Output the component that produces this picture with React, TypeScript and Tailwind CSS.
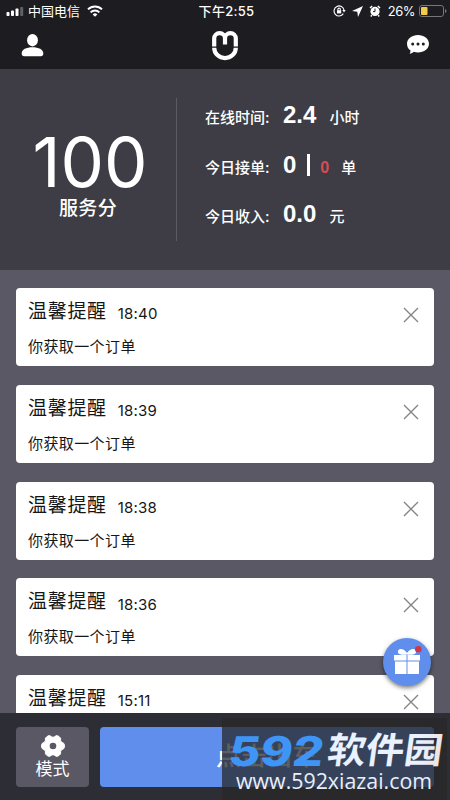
type Notice = { id: number; time: string };

const notices: Notice[] = [
  { id: 1, time: '18:40' },
  { id: 2, time: '18:39' },
  { id: 3, time: '18:38' },
  { id: 4, time: '18:36' },
  { id: 5, time: '15:11' },
];

function StatusBar() {
  return (
    <div className="grid h-[22px] grid-cols-[1fr_auto_1fr] items-center pl-[6px] pr-[3px] leading-none">
      <div className="flex items-center">
        <svg width="18" height="9" viewBox="0 0 18 9" fill="#fff">
          <rect x="0.5" y="5" width="3" height="4" rx="0.8" />
          <rect x="5" y="3.5" width="3" height="5.5" rx="0.8" />
          <rect x="9.5" y="1.5" width="3" height="7.5" rx="0.8" />
          <rect x="14.2" y="0" width="3" height="9" rx="0.8" opacity="0.3" />
        </svg>
        <span className="ml-[4px] text-[13px]">中国电信</span>
        <svg className="ml-[7px]" width="16" height="12" viewBox="0 0 16 12" fill="none" stroke="#fff" strokeWidth="2">
          <path d="M1 4.4a10 10 0 0 1 14 0" />
          <path d="M3.6 7.4a6.3 6.3 0 0 1 8.8 0" />
          <path d="M8 11.8 5.7 9.4a3.3 3.3 0 0 1 4.6 0z" fill="#fff" stroke="none" />
        </svg>
      </div>
      <span className="text-[13px] font-medium tracking-[0.3px]">下午2:55</span>
      <div className="flex items-center justify-end">
        <svg width="13" height="12" viewBox="0 0 13 12" fill="none" stroke="#fff" strokeWidth="1.1">
          <path d="M10.3 8.6A5 5 0 1 1 11 5.2" />
          <path d="M9.3 5h3.4L11 7.4z" fill="#fff" stroke="none" />
          <rect x="4" y="5.2" width="4.2" height="3.2" fill="#fff" stroke="none" />
          <path d="M4.9 5.4V4.3a1.2 1.2 0 0 1 2.4 0v1.1" />
        </svg>
        <svg className="ml-[6px]" width="11" height="11" viewBox="0 0 11 11" fill="#fff">
          <path d="M11 0 6 11 5.3 5.7 0 5z" />
        </svg>
        <svg className="ml-[6px]" width="12" height="12" viewBox="0 0 12 12">
          <circle cx="6" cy="6.4" r="4.6" fill="#fff" />
          <path d="M1 3 3.2 1M11 3 8.8 1M2.8 10.2l-1 1.2M9.2 10.2l1 1.2" stroke="#fff" strokeWidth="1.5" />
          <path d="M6 3.6v3H4" fill="none" stroke="#1d1c21" />
        </svg>
        <span className="ml-[7px] text-[13px] tracking-[-0.5px]">26%</span>
        <svg className="ml-[4px]" width="28" height="12" viewBox="0 0 28 12">
          <rect x="0.5" y="0.5" width="24" height="11" rx="2.4" fill="none" stroke="#77767a" />
          <rect x="2" y="2" width="6.5" height="8" rx="1" fill="#f4cb47" />
          <path d="M26 4v4q1.5-.7 1.5-2T26 4" fill="#77767a" />
        </svg>
      </div>
    </div>
  );
}

function TitleBar() {
  return (
    <div className="flex h-[47px] items-start justify-between px-[21px]">
      <svg className="mt-[12px]" width="23" height="23" viewBox="0 0 23 23" fill="#fff">
        <ellipse cx="11.5" cy="6.2" rx="5.4" ry="6.2" />
        <path d="M.7 19.3c0-3.8 4.6-6 10.8-6s10.8 2.2 10.8 6c0 2.2-.8 3-2.5 3H3.2c-1.7 0-2.5-.8-2.5-3z" />
      </svg>
      <svg className="-ml-[2px] mt-[9px]" width="26" height="30" viewBox="0 0 26 30" fill="none" stroke="#fff" strokeWidth="4.2">
        <path d="M2.2 15.6V7.600a5.400 5.400 0 0 1 10.800 0V13.500M13 13.500V7.600a5.400 5.400 0 0 1 10.800 0V15.600" />
        <path d="M2.200 16.800a10.800 10.300 0 0 0 21.600 0" />
      </svg>
      <svg className="mt-[13px]" width="22" height="20" viewBox="0 0 22 20">
        <path d="M11 0c6 0 11 3.7 11 8.7s-5 8.7-11 8.7c-1.5 0-3-.2-4.2-.6-1 .9-2.4 1.7-4.2 1.9.7-.9 1-2 .9-3.1C1.3 14 0 11.5 0 8.7 0 3.7 5 0 11 0" fill="#fff" />
        <g fill="#1d1c21">
          <circle cx="5.7" cy="9" r="1.5" />
          <circle cx="11" cy="9" r="1.5" />
          <circle cx="16.3" cy="9" r="1.5" />
        </g>
      </svg>
    </div>
  );
}

function Stats() {
  return (
    <section className="flex h-[201px] shrink-0 items-start bg-[#3e3d46] pt-[29px]">
      <div className="flex w-[176px] flex-col items-center">
        <div className="mt-[32px] h-[65px] pl-[4px] text-[69px] leading-[65px]">100</div>
        <div className="mt-[1px] text-[19px] font-medium leading-[26px] tracking-[0.4px]">服务分</div>
      </div>
      <div className="h-[143px] w-px bg-[#5b5a64]" />
      <div className="-mt-px ml-[28px] text-[15px] font-medium">
        <div className="flex h-[36px] items-center">
          <span className="mt-[6px] w-[78px]">在线时间:</span>
          <b className="font-['Liberation_Sans',sans-serif] text-[24px]">2.4</b>
          <span className="ml-[13px] mt-[6px]">小时</span>
        </div>
        <div className="mt-[14px] flex h-[36px] items-center">
          <span className="mt-[6px] w-[78px]">今日接单:</span>
          <b className="font-['Liberation_Sans',sans-serif] text-[24px]">0</b>
          <span className="ml-[11px] h-[22px] w-[3px] bg-white" />
          <b className="ml-[10px] mt-[6px] font-['Liberation_Sans',sans-serif] text-[16px] text-[#d84c55]">0</b>
          <span className="ml-[12px] mt-[6px]">单</span>
        </div>
        <div className="mt-[13px] flex h-[36px] items-center">
          <span className="mt-[6px] w-[78px]">今日收入:</span>
          <b className="font-['Liberation_Sans',sans-serif] text-[24px]">0.0</b>
          <span className="ml-[13px] mt-[6px]">元</span>
        </div>
      </div>
    </section>
  );
}

function NoticeCard({ time }: { time: string }) {
  return (
    <article className="flex h-[78px] shrink-0 justify-between rounded-[4px] bg-white pl-[12px] pr-[15px] text-[#161616]">
      <div>
        <div className="mt-[9px] flex h-[30px] items-center">
          <h2 className="text-[19px] leading-[30px] tracking-[0.7px]">温馨提醒</h2>
          <time className="ml-[11px] mt-[5px] text-[15px] tracking-[0.2px]">{time}</time>
        </div>
        <p className="mt-[8px] text-[15px] leading-[24px] tracking-[0.4px]">你获取一个订单</p>
      </div>
      <svg className="mt-[19px]" width="16" height="16" viewBox="0 0 16 16" stroke="#858585" strokeWidth="1.4">
        <path d="M1 1l14 14M15 1 1 15" />
      </svg>
    </article>
  );
}

function GiftButton() {
  return (
    <button className="absolute left-[383px] top-[638px] flex size-[48px] items-center justify-center rounded-full bg-[#5f8eed] shadow-[0_2px_4px_rgba(0,0,0,0.5)]">
      <svg className="overflow-visible" width="28" height="28" viewBox="0 0 28 28">
        <path d="M1 7h12.500v5.500H1zM14.500 7H27v5.500H14.500zM2 13.500h11.500v12.500H2zM14.500 13.500H26v12.500H14.500z" fill="#fff" />
        <path d="M14 6.500C8 7.500 4 6 5 3s6-2.500 9 2c3-4.500 8-5 9-2s-3 4.500-9 3.500" fill="#fff" />
        <circle cx="25.300" cy="1.200" r="3.300" fill="#d43445" />
      </svg>
    </button>
  );
}

function BottomBar() {
  return (
    <footer className="flex h-[87px] shrink-0 items-start gap-[11px] bg-[#2d2d36] px-4 pt-[14px]">
      <button className="flex h-[60px] w-[73px] flex-col items-center rounded-[4px] bg-[#5a5864] pt-[7px]">
        <svg width="26" height="24" viewBox="-13 -12 26 24">
          <path
            d="M-6-9.500Q-3.500-11.500-1.500-9.200Q0-8.200 1.500-9.200Q3.500-11.500 6-9.500Q8.300-8 7.600-5.800Q7.400-4 9.500-3.500Q11.500-3 11.500 0T9.500 3.500Q7.400 4 7.600 5.800Q8.300 8 6 9.500Q3.500 11.500 1.500 9.200Q0 8.200-1.500 9.200Q-3.500 11.500-6 9.500Q-8.300 8-7.600 5.800Q-7.400 4-9.500 3.500Q-11.500 3-11.500 0T-9.500-3.500Q-7.400-4-7.600-5.800Q-8.300-8-6-9.500z"
            fill="#fff"
            stroke="#fff"
            strokeLinejoin="round"
          />
          <circle r="3.3" fill="#5a5864" />
        </svg>
        <span className="text-[17px] leading-[22px]">模式</span>
      </button>
      <button className="h-[60px] flex-1 rounded-[4px] bg-[#5f8eed] text-[25px] font-medium tracking-[0.5px]">点击出车</button>
    </footer>
  );
}

function Watermark() {
  return (
    <div className="absolute left-[222px] top-[718px] h-[82px] w-[225px] bg-[#282828]/75">
      <svg width="225" height="82" viewBox="0 0 225 82">
        <defs>
          <linearGradient id="mark">
            <stop offset="0.8" stopColor="#eaf1ff" />
            <stop offset="1" stopColor="#efe2df" />
          </linearGradient>
        </defs>
        <text transform="translate(5 48) skewX(-8)" textLength="95" lengthAdjust="spacingAndGlyphs" fill="#3f95f5" className="font-['Inter',sans-serif] text-[41px] font-extrabold">592</text>
        <text transform="translate(104 45) skewX(-8)" textLength="115" lengthAdjust="spacingAndGlyphs" fill="url(#mark)" className="font-['Noto_Sans_CJK_SC',sans-serif] text-[36px] font-bold">软件园</text>
        <text x="14" y="71" textLength="196" lengthAdjust="spacingAndGlyphs" fill="#e9effa" className="font-['Open_Sans','Noto_Sans',sans-serif] text-[22px] font-medium">www.592xiazai.com</text>
      </svg>
    </div>
  );
}

export default function App() {
  return (
    <div className="relative flex h-[800px] w-[450px] flex-col overflow-hidden bg-[#5a5864] font-['Inter','Noto_Sans_CJK_SC',sans-serif] text-white">
      <header className="h-[69px] shrink-0 bg-[#1d1c21]">
        <StatusBar />
        <TitleBar />
      </header>
      <Stats />
      <main className="flex min-h-0 flex-1 flex-col gap-[18.8px] overflow-hidden px-4 pt-[18px]">
        {notices.map((notice) => (
          <NoticeCard key={notice.id} time={notice.time} />
        ))}
      </main>
      <BottomBar />
      <GiftButton />
      <Watermark />
    </div>
  );
}
